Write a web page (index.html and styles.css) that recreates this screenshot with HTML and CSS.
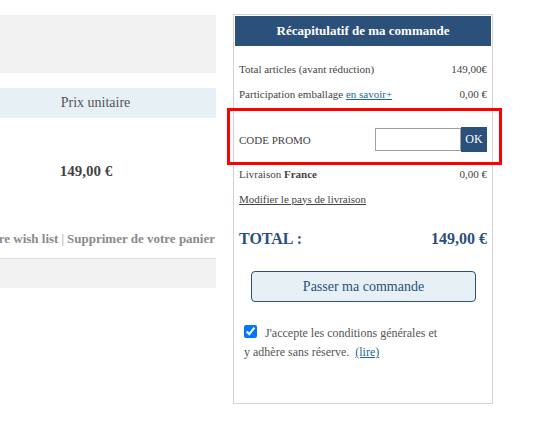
FILE: index.html
```html
<!DOCTYPE html>
<html lang="fr">
<head>
<meta charset="utf-8">
<title>Panier</title>
<link rel="stylesheet" href="styles.css">
</head>
<body>
<div class="page">
  <div class="cart">
    <div class="cart-top"></div>
    <div class="cart-head"><span>Prix unitaire</span></div>
    <div class="cart-price">149,00 €</div>
    <div class="cart-links"><span class="lk">re wish list</span> <span class="sep">|</span> <span class="lk">Supprimer de votre panier</span></div>
    <div class="cart-foot"></div>
  </div>
  <div class="summary">
    <div class="sum-title">Récapitulatif de ma commande</div>
    <div class="rows">
      <div class="row"><span>Total articles (avant réduction)</span><span>149,00€</span></div>
      <div class="row"><span>Participation emballage <a class="link" href="#">en savoir+</a></span><span>0,00 €</span></div>
      <div class="row promo">
        <span>CODE PROMO</span>
        <span class="promo-field"><input class="promo-input" type="text"><button class="ok">OK</button></span>
      </div>
      <div class="row"><span>Livraison <b>France</b></span><span>0,00 €</span></div>
      <div class="row"><a class="modif" href="#">Modifier le pays de livraison</a></div>
      <div class="total"><span>TOTAL :</span><span>149,00 €</span></div>
      <div class="btn-wrap"><button class="order">Passer ma commande</button></div>
      <p class="cgv"><input class="chk" type="checkbox" checked> J'accepte les conditions générales et<br>y adhère sans réserve. &nbsp;<a class="link" href="#">(lire)</a></p>
    </div>
  </div>
</div>
<div class="highlight"></div>
</body>
</html>
```

FILE: styles.css
```css
html, body {
  margin: 0;
  padding: 0;
  background: #fff;
  font-family: "Liberation Serif", "Times New Roman", serif;
  color: #444;
}
.page {
  display: flex;
  align-items: flex-start;
  gap: 17px;
}
.cart {
  width: 216px;
  padding-top: 15px;
  display: flex;
  flex-direction: column;
}
.cart-top {
  height: 58px;
  background: #f2f2f2;
}
.cart-head {
  margin-top: 15px;
  height: 30px;
  background: #e6f0f5;
  display: flex;
  align-items: center;
  justify-content: center;
  padding-right: 25px;
  font-size: 14px;
  color: #555;
}
.cart-price {
  height: 102px;
  padding-top: 4px;
  box-sizing: border-box;
  display: flex;
  align-items: center;
  justify-content: center;
  padding-right: 44px;
  font-size: 15px;
  font-weight: bold;
  color: #444;
}
.cart-links {
  height: 36px;
  line-height: 38px;
  white-space: nowrap;
  font-size: 13px;
  color: #8a8a8a;
  overflow: hidden;
  display: flex;
  justify-content: flex-end;
  gap: 3px;
  margin-right: 1px;
}
.cart-links .lk { font-weight: bold; flex-shrink: 0; }
.cart-links .sep { color: #999; flex-shrink: 0; }
.cart-foot {
  margin-top: 2px;
  height: 29px;
  border-top: 1px solid #e2e2e2;
  background: #f2f2f2;
}
.summary {
  margin-top: 14px;
  width: 260px;
  height: 390px;
  box-sizing: border-box;
  border: 1px solid #dcced2;
  padding: 1px;
}
.sum-title {
  height: 30px;
  background: #2b5079;
  color: #fff;
  font-weight: bold;
  font-size: 13px;
  display: flex;
  align-items: center;
  justify-content: center;
}
.rows {
  padding: 10px 4px 0 4px;
}
.row {
  height: 25px;
  display: flex;
  align-items: center;
  justify-content: space-between;
  font-size: 11px;
  color: #444;
}
.link {
  color: #23698f;
  text-decoration: underline;
}
.promo {
  height: 25px;
  padding: 21px 0 9px 0;
}
.promo-field {
  display: flex;
  align-items: center;
}
.promo-input {
  box-sizing: border-box;
  width: 86px;
  height: 23px;
  margin: 0;
  border: 1px solid #a0a0a0;
  padding: 0 3px;
}
.ok {
  box-sizing: border-box;
  width: 26px;
  height: 25px;
  margin: 0;
  border: none;
  padding: 0;
  background: #2b5079;
  color: #fff;
  font-family: "Liberation Serif", serif;
  font-size: 12px;
}
.modif {
  color: #444;
  text-decoration: underline;
}
.total {
  margin-top: 15px;
  height: 26px;
  display: flex;
  align-items: center;
  justify-content: space-between;
  font-size: 16px;
  font-weight: bold;
  color: #2b5079;
}
.btn-wrap {
  margin-top: 19px;
  padding-left: 12px;
}
.order {
  box-sizing: border-box;
  width: 225px;
  height: 31px;
  margin: 0;
  background: #e6f0f5;
  border: 1px solid #2b5079;
  border-radius: 4px;
  color: #2b5079;
  font-family: "Liberation Serif", serif;
  font-size: 14px;
}
.cgv {
  margin: 22px 0 0 0;
  padding-left: 5px;
  font-size: 12px;
  line-height: 19px;
  color: #555;
}
.chk {
  width: 13px;
  height: 13px;
  margin: 0 5px 0 0;
  vertical-align: -1px;
}
.highlight {
  position: absolute;
  left: 227px;
  top: 108px;
  width: 275px;
  height: 57px;
  box-sizing: border-box;
  border: 3px solid #ff0000;
  pointer-events: none;
}
```
